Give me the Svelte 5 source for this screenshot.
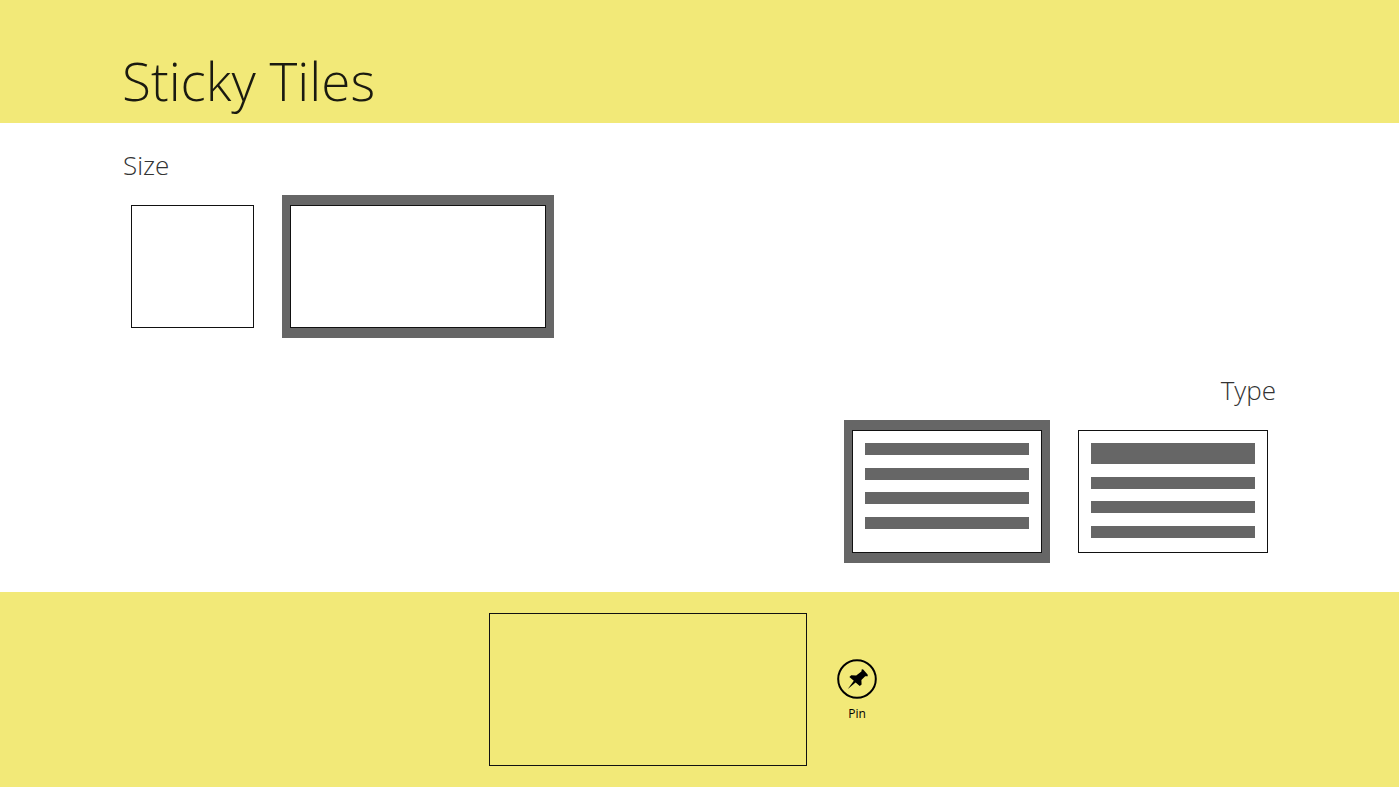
<script lang="ts">
  type Size = "square" | "wide";
  type Kind = "note" | "titled";

  const sizes: { id: Size; label: string }[] = [
    { id: "square", label: "Square" },
    { id: "wide", label: "Wide" },
  ];

  const kinds: { id: Kind; label: string; lines: string[] }[] = [
    { id: "note", label: "Note", lines: ["text", "text", "text", "text"] },
    { id: "titled", label: "Titled", lines: ["title", "text", "text", "text"] },
  ];

  let size: Size = $state("wide");
  let kind: Kind = $state("note");
</script>

<div class="app">
  <header class="header">
    <h1>Sticky Tiles</h1>
  </header>

  <main class="content">
    <section class="group">
      <h2 id="size-heading">Size</h2>
      <div class="options" role="radiogroup" aria-labelledby="size-heading">
        {#each sizes as option (option.id)}
          <label class="option">
            <input
              type="radio"
              name="size"
              value={option.id}
              aria-label={option.label}
              bind:group={size}
            />
            <span class="tile {option.id}"></span>
          </label>
        {/each}
      </div>
    </section>

    <section class="group right">
      <h2 id="type-heading">Type</h2>
      <div class="options" role="radiogroup" aria-labelledby="type-heading">
        {#each kinds as option (option.id)}
          <label class="option">
            <input
              type="radio"
              name="kind"
              value={option.id}
              aria-label={option.label}
              bind:group={kind}
            />
            <span class="tile lined">
              <span class="lines {option.id}">
                {#each option.lines as line}
                  <span class="line {line}"></span>
                {/each}
              </span>
            </span>
          </label>
        {/each}
      </div>
    </section>
  </main>

  <footer class="footer">
    <div class="preview" class:small={size === "square"}></div>
    <button class="pin" type="button">
      <svg viewBox="0 0 40 40" aria-hidden="true">
        <circle cx="20" cy="20" r="18.8" />
        <path
          d="M24.8 10.2 L26.2 10.6 L30.6 15.4 L30.8 17.2 L28.2 17.2 L24.4 21 L24.6 25.4 L22.8 27 L18.6 23.4 L10.8 30 L16.8 21.8 L12.4 18 L14.2 16.2 L19.2 16.4 L24.4 12.6 Z"
        />
      </svg>
      <span>Pin</span>
    </button>
  </footer>
</div>

<style>
  :global(body) {
    margin: 0;
  }

  .app {
    display: flex;
    flex-direction: column;
    min-height: 100vh;
    background: #fff;
    color: #1a1a10;
    font-family: "Open Sans", "Noto Sans", sans-serif;
  }

  .header {
    padding: 41px 122px 2px;
    background: #f2e978;
  }

  h1 {
    margin: 0;
    font-size: 53px;
    font-weight: 300;
    line-height: 80px;
  }

  .content {
    display: flex;
    flex-direction: column;
    gap: 30px;
    padding: 20px 123px 29px;
  }

  .group {
    display: flex;
    flex-direction: column;
    align-items: flex-start;
  }

  .group.right {
    align-items: flex-end;
  }

  h2 {
    margin: 0 0 8px;
    color: #333;
    font-size: 26px;
    font-weight: 300;
    line-height: 44px;
  }

  .options {
    display: flex;
    gap: 20px;
  }

  .option {
    padding: 10px 8px;
    cursor: pointer;
  }

  .option:has(input:checked) {
    background: #666;
  }

  .option:focus-within:has(:focus-visible) {
    outline: 1px dotted #000;
  }

  .option input {
    position: absolute;
    width: 1px;
    height: 1px;
    margin: 0;
    opacity: 0;
  }

  .tile {
    display: block;
    box-sizing: border-box;
    width: 123px;
    height: 123px;
    border: 1px solid #111;
    background: #fff;
  }

  .tile.wide {
    width: 256px;
  }

  .tile.lined {
    width: 190px;
    padding: 12px;
  }

  .lines {
    display: flex;
    flex-direction: column;
    justify-content: space-between;
    height: 86px;
  }

  .lines.titled {
    height: 95px;
  }

  .line {
    height: 12px;
    background: #666;
  }

  .line.title {
    height: 21px;
  }

  .footer {
    display: flex;
    flex: 1;
    align-items: flex-start;
    justify-content: center;
    padding: 21px 0;
    background: #f2e978;
  }

  .preview {
    box-sizing: border-box;
    width: 318px;
    height: 153px;
    border: 1px solid #111;
  }

  .preview.small {
    width: 153px;
  }

  .pin {
    display: flex;
    flex-direction: column;
    align-items: center;
    gap: 5px;
    width: 100px;
    margin: 46px 3px 0 0;
    padding: 0;
    border: none;
    background: transparent;
    color: #000;
    font-family: inherit;
    font-size: 12px;
    line-height: 20px;
    cursor: pointer;
  }

  .pin svg {
    width: 40px;
    height: 40px;
  }

  .pin circle {
    fill: none;
    stroke: #000;
    stroke-width: 2;
  }
</style>
